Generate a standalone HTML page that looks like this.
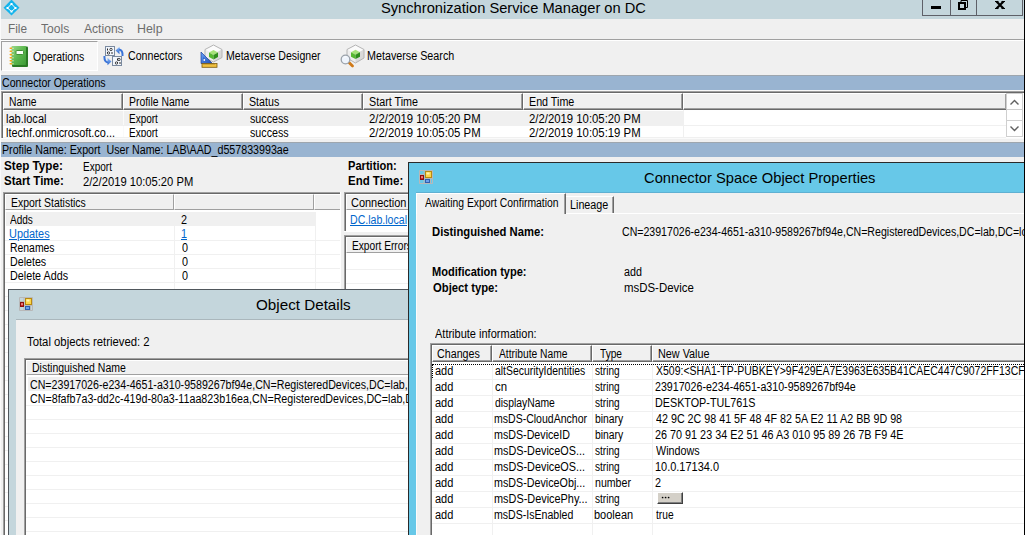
<!DOCTYPE html>
<html><head><meta charset="utf-8">
<style>
*{margin:0;padding:0;box-sizing:border-box}
html,body{width:1026px;height:535px;overflow:hidden;background:#f0f0f0}
body{position:relative;font-family:"Liberation Sans",sans-serif;font-size:12px;color:#000}
.a{position:absolute}
.t{position:absolute;white-space:nowrap;transform-origin:0 0;color:#000;-webkit-text-stroke:0px currentColor}
.lnk{color:#0066cc;text-decoration:underline}
.clip{position:absolute;overflow:hidden}
/* listview header cell: white top/left, #a0a0a0 inner bottom/right, #696969 outer bottom/right */
.hc{position:absolute;background:#f0f0f0;border-top:1px solid #fff;border-left:1px solid #fff;border-right:1px solid #696969;border-bottom:1px solid #696969;box-shadow:inset -1px -1px 0 #a0a0a0}
.hf{position:absolute;background:#f0f0f0;border-top:1px solid #fff;border-left:1px solid #fff;border-right:1px solid #a0a0a0;border-bottom:1px solid #a0a0a0}
.gl{position:absolute;height:1px;background:#f0f0f0}
.gv{position:absolute;width:1px;background:#f0f0f0}
.so{position:absolute;border-top:1px solid #a0a0a0;border-left:1px solid #a0a0a0}
.si{position:absolute;border-top:1px solid #696969;border-left:1px solid #696969;background:#fff;overflow:hidden}
</style></head><body>

<!-- ===== main window chrome ===== -->
<div class="a" style="left:0;top:0;width:1px;height:535px;background:#fafafa"></div>
<div class="a" style="left:1px;top:0;width:1023px;height:19px;background:#c4d6dc"></div>

<!-- app icon -->
<svg class="a" style="left:1.5px;top:0" width="19" height="17" viewBox="0 0 19 17">
 <path d="M9.5 -0.5 L17.5 7.8 L9.5 15.5 L1.5 7.8 Z" fill="#14b4ec"/>
 <path d="M9.5 4 L13.5 8 L9.5 11.5 L5.5 8 Z" fill="none" stroke="#fff" stroke-width="1"/>
 <rect x="8.5" y="3" width="2" height="2" fill="#fff"/><rect x="4.5" y="7" width="2" height="2" fill="#fff"/>
 <rect x="12.5" y="7" width="2" height="2" fill="#fff"/><rect x="8.5" y="10.5" width="2" height="2" fill="#fff"/>
</svg>

<!-- caption buttons -->
<div class="a" style="left:922px;top:-1px;width:101px;height:17px;border:1px solid #5e6068"></div>
<div class="a" style="left:950px;top:0;width:1px;height:15px;background:#5e6068"></div>
<div class="a" style="left:976px;top:0;width:1px;height:15px;background:#5e6068"></div>
<div class="a" style="left:931px;top:6px;width:10px;height:3px;background:#000"></div>
<svg class="a" style="left:956px;top:0" width="14" height="12" viewBox="0 0 14 12">
 <path d="M5 2 V0.5 H11.5 V7.5 H10" fill="none" stroke="#000" stroke-width="1"/>
 <rect x="3" y="3" width="6" height="6" fill="none" stroke="#000" stroke-width="2"/>
</svg>
<svg class="a" style="left:994px;top:0px" width="12" height="10" viewBox="0 0 12 10">
 <path d="M2.5 1.5 L9.5 8.5 M9.5 1.5 L2.5 8.5" stroke="#000" stroke-width="2.2"/>
 <path d="M1 1.5h3.5M7.5 1.5h3.5M1 8.5h3.5M7.5 8.5h3.5" stroke="#000" stroke-width="1"/>
</svg>

<div class="a" style="left:1px;top:39px;width:1023px;height:1px;background:#a0a0a0"></div>
<div class="a" style="left:1px;top:40px;width:1023px;height:1px;background:#fff"></div>

<!-- toolbar -->
<div class="a" style="left:1px;top:41px;width:97px;height:30px;background:#f7f7f7;border-top:1px solid #a0a0a0;border-left:1px solid #a0a0a0;border-right:1px solid #fff;border-bottom:1px solid #fff"></div>
<svg class="a" style="left:9px;top:45px" width="21" height="23" viewBox="0 0 21 23">
 <defs><linearGradient id="gn" x1="0" y1="0" x2="1" y2="1"><stop offset="0" stop-color="#9ad88a"/><stop offset="0.5" stop-color="#5cb84e"/><stop offset="1" stop-color="#3d9a36"/></linearGradient></defs>
 <rect x="3" y="1.5" width="16" height="20.5" rx="1" fill="#2a7a24"/>
 <rect x="2.5" y="1" width="14.5" height="19" rx="0.8" fill="url(#gn)"/>
 <rect x="7" y="5.5" width="7.5" height="4" rx="1" fill="#fafff6" stroke="#3f8f36" stroke-width="1"/>
 <g fill="#f2a81c"><rect x="0.5" y="2.5" width="3" height="1.6" rx="0.8"/><rect x="0.5" y="5.5" width="3" height="1.6" rx="0.8"/><rect x="0.5" y="8.8" width="3" height="1.6" rx="0.8"/><rect x="0.5" y="12" width="3" height="1.6" rx="0.8"/><rect x="0.5" y="15" width="3" height="1.6" rx="0.8"/><rect x="0.5" y="18" width="3" height="1.6" rx="0.8"/></g>
 <g fill="#ffffff"><rect x="3.5" y="2.8" width="1" height="1"/><rect x="3.5" y="5.8" width="1" height="1"/><rect x="3.5" y="9.1" width="1" height="1"/><rect x="3.5" y="12.3" width="1" height="1"/><rect x="3.5" y="15.3" width="1" height="1"/><rect x="3.5" y="18.3" width="1" height="1"/></g>
</svg>

<svg class="a" style="left:103px;top:45px" width="22" height="22" viewBox="0 0 22 22">
 <defs><linearGradient id="ab" x1="0" y1="0" x2="0" y2="1"><stop offset="0" stop-color="#8fc0ff"/><stop offset="1" stop-color="#2a62c8"/></linearGradient></defs>
 <rect x="2.5" y="1.5" width="9" height="9" fill="#f2f6fc" stroke="#7a8aa0"/>
 <rect x="9.5" y="11.5" width="9" height="9" fill="#f2f6fc" stroke="#7a8aa0"/>
 <path d="M4.5 3.5v2M4.5 7v1M14.5 13.5v2M14.5 17v1" stroke="#222"/>
 <circle cx="8" cy="4.5" r="1.2" fill="none" stroke="#333" stroke-width="0.9"/>
 <circle cx="5.5" cy="8" r="1.2" fill="none" stroke="#333" stroke-width="0.9"/>
 <path d="M9 7v2" stroke="#333"/>
 <circle cx="16" cy="14.5" r="1.2" fill="none" stroke="#333" stroke-width="0.9"/>
 <circle cx="13.5" cy="18" r="1.2" fill="none" stroke="#333" stroke-width="0.9"/>
 <path d="M17 17v2" stroke="#333"/>
 <path d="M12.5 5.5 L16.5 1.8 L16.5 9.2 Z" fill="url(#ab)"/>
 <path d="M16 4.5 Q20 5 19.5 11" fill="none" stroke="#3a74d8" stroke-width="2"/>
 <path d="M8.5 16.5 L4.5 12.8 L4.5 20.2 Z" fill="url(#ab)"/>
 <path d="M5 17.5 Q1 17 1.5 11" fill="none" stroke="#3a74d8" stroke-width="2"/>
</svg>

<svg class="a" style="left:196px;top:42px" width="30" height="28" viewBox="0 0 30 28">
 <defs>
  <linearGradient id="hx" x1="0" y1="0" x2="0" y2="1"><stop offset="0" stop-color="#ffffff"/><stop offset="1" stop-color="#d6d6d6"/></linearGradient>
  <linearGradient id="tb" x1="0" y1="0" x2="1" y2="1"><stop offset="0" stop-color="#6aa6ff"/><stop offset="1" stop-color="#1a48b0"/></linearGradient>
 </defs>
 <path d="M17.5 3 L26 7.5 L17.5 12 L9 7.5 Z" fill="#fbfbfb"/>
 <path d="M9 7.5 L17.5 12 L17.5 20 L9 15.5 Z" fill="#eeeeee"/>
 <path d="M26 7.5 L17.5 12 L17.5 20 L26 15.5 Z" fill="#d9d9d9"/>
 <path d="M17.5 3 L26 7.5 L26 15.5 L17.5 20 L9 15.5 L9 7.5 Z" fill="none" stroke="#b4b4b4"/>
 <path d="M17.5 8 L22 10.5 L17.5 13 L13 10.5 Z" fill="#a6e27a"/>
 <path d="M13 10.5 L17.5 13 L17.5 17.5 L13 15 Z" fill="#56b830"/>
 <path d="M22 10.5 L17.5 13 L17.5 17.5 L22 15 Z" fill="#2f8e1c"/>
 <path d="M5 10 L16.5 21.5 L5 21.5 Z" fill="url(#tb)" stroke="#1d3f98" stroke-width="0.7"/>
 <path d="M7 15 L11.5 19.5 L7 19.5 Z" fill="#3468c8"/>
 <circle cx="8.3" cy="18" r="0.9" fill="#fff"/>
 <rect x="6" y="21.5" width="15" height="3.8" fill="#f0c040" stroke="#7a5a10" stroke-width="0.8"/>
 <path d="M8 21.5v1.5M10 21.5v1.5M12 21.5v1.5M14 21.5v1.5M16 21.5v1.5M18 21.5v1.5" stroke="#8a6a20" stroke-width="0.6"/>
</svg>

<svg class="a" style="left:336px;top:42px" width="30" height="28" viewBox="0 0 30 28">
 <path d="M19.5 3 L28 7.5 L19.5 12 L11 7.5 Z" fill="#fbfbfb"/>
 <path d="M11 7.5 L19.5 12 L19.5 21 L11 16 Z" fill="#eeeeee"/>
 <path d="M28 7.5 L19.5 12 L19.5 21 L28 16 Z" fill="#d9d9d9"/>
 <path d="M19.5 3 L28 7.5 L28 16 L19.5 21 L11 16 L11 7.5 Z" fill="none" stroke="#b4b4b4"/>
 <path d="M19.5 7.8 L24 10.3 L19.5 12.8 L15 10.3 Z" fill="#a6e27a"/>
 <path d="M15 10.3 L19.5 12.8 L19.5 17 L15 14.8 Z" fill="#56b830"/>
 <path d="M24 10.3 L19.5 12.8 L19.5 17 L24 14.8 Z" fill="#2f8e1c"/>
 <path d="M12.5 20 L16.5 24" stroke="#d07a18" stroke-width="2.8" stroke-linecap="round"/>
 <circle cx="9.5" cy="17.5" r="4.3" fill="#eef4fc" stroke="#9aa2aa" stroke-width="1.3"/>
 <path d="M7.5 16 Q8.5 14.5 10.5 14.8" fill="none" stroke="#fff" stroke-width="1"/>
</svg>

<!-- ===== Connector Operations bar ===== -->
<div class="a" style="left:1px;top:75px;width:1023px;height:1px;background:#9ea6ae"></div>
<div class="a" style="left:1px;top:76px;width:1023px;height:14px;background:#99b4d1"></div>
<div class="a" style="left:1px;top:90px;width:1023px;height:1px;background:#f8f8f8"></div>

<!-- connector ops list -->
<div class="so" style="left:1px;top:91px;width:1023px;height:48px"></div>
<div class="si" style="left:2px;top:92px;width:1022px;height:46px">
 <div class="hc" style="left:0;top:0;width:120px;height:17px"></div>
 <div class="hc" style="left:120px;top:0;width:120px;height:17px"></div>
 <div class="hc" style="left:240px;top:0;width:120px;height:17px"></div>
 <div class="hc" style="left:360px;top:0;width:160px;height:17px"></div>
 <div class="hc" style="left:520px;top:0;width:160px;height:17px"></div>
 <div class="hc" style="left:680px;top:0;width:324px;height:17px"></div>
 <div class="a" style="left:0;top:18px;width:680px;height:1px;background:#fff"></div>
 <div class="a" style="left:1px;top:18px;width:679px;height:15px;background:#f0f0f0"></div>
 <div class="gv" style="left:120px;top:18px;height:30px;background:#fafafa"></div>
 <div class="gl" style="left:0px;top:32px;width:1010px"></div>
 <div class="gl" style="left:0px;top:44px;width:1010px"></div>
 <div class="gv" style="left:680px;top:17px;height:30px"></div>
</div>
<div class="clip" style="left:0;top:0;width:1006px;height:137px">
<div class="t" style="left:6.19px;top:126px;font-size:12px;line-height:14px;transform:scaleX(0.9076)">ltechf.onmicrosoft.co...</div>
<div class="t" style="left:129.47px;top:126px;font-size:12px;line-height:14px;transform:scaleX(0.8324)">Export</div>
<div class="t" style="left:249.80px;top:126px;font-size:12px;line-height:14px;transform:scaleX(0.8930)">success</div>
<div class="t" style="left:368.86px;top:126px;font-size:12px;line-height:14px;transform:scaleX(0.9448)">2/2/2019 10:05:05 PM</div>
<div class="t" style="left:529.36px;top:126px;font-size:12px;line-height:14px;transform:scaleX(0.9448)">2/2/2019 10:05:19 PM</div>
</div>
<!-- scrollbar -->
<div class="a" style="left:1006px;top:93px;width:17px;height:45px;background:#fff"></div>
<div class="a" style="left:1006px;top:93px;width:17px;height:17px;border:1px solid #cfcfcf;background:#fff"></div>
<div class="a" style="left:1006px;top:110px;width:17px;height:10px;border:1px solid #cfcfcf;border-top:0;border-bottom:0;background:#fff"></div>
<div class="a" style="left:1006px;top:120px;width:17px;height:17px;border:1px solid #cfcfcf;background:#fff"></div>
<svg class="a" style="left:1006px;top:93px" width="17" height="44" viewBox="0 0 17 44">
 <path d="M4.5 11.5 L8.5 7.5 L12.5 11.5" fill="none" stroke="#606060" stroke-width="1.4"/>
 <path d="M4.5 33.5 L8.5 37.5 L12.5 33.5" fill="none" stroke="#606060" stroke-width="1.4"/>
</svg>
<div class="a" style="left:1px;top:138px;width:1023px;height:4px;background:#f0f0f0"></div>
<div class="a" style="left:1px;top:138px;width:1023px;height:1px;background:#fafafa"></div>

<!-- ===== Profile bar ===== -->
<div class="a" style="left:1px;top:142px;width:1023px;height:1px;background:#9ea6ae"></div>
<div class="a" style="left:1px;top:143px;width:1023px;height:14px;background:#99b4d1"></div>

<!-- export statistics list -->
<div class="a" style="left:1px;top:192px;width:2px;height:343px;background:#f0f0f0"></div>
<div class="so" style="left:3px;top:192px;width:338px;height:343px"></div>
<div class="a" style="left:340px;top:192px;width:1px;height:343px;background:#fff"></div>
<div class="si" style="left:4px;top:193px;width:336px;height:342px">
 <div class="hf" style="left:0;top:0;width:169px;height:16px"></div>
 <div class="hf" style="left:169px;top:0;width:140px;height:16px"></div>
 <div class="hf" style="left:309px;top:0;width:40px;height:16px"></div>
 <div class="a" style="left:1px;top:18px;width:309px;height:14px;background:#f0f0f0"></div>
 <div class="gv" style="left:169px;top:18px;height:340px"></div>
 <div class="gv" style="left:310px;top:18px;height:340px"></div>
 <div class="gl" style="left:0;top:46px;width:340px"></div>
 <div class="gl" style="left:0;top:60px;width:340px"></div>
 <div class="gl" style="left:0;top:74px;width:340px"></div>
 <div class="gl" style="left:0;top:88px;width:340px"></div>
 <div class="gl" style="left:0;top:102px;width:340px"></div>
 <div class="gl" style="left:0;top:116px;width:340px"></div>
 <div class="gl" style="left:0;top:130px;width:340px"></div>
 <div class="gl" style="left:0;top:144px;width:340px"></div>
 <div class="gl" style="left:0;top:158px;width:340px"></div>
 <div class="gl" style="left:0;top:172px;width:340px"></div>
 <div class="gl" style="left:0;top:186px;width:340px"></div>
 <div class="gl" style="left:0;top:200px;width:340px"></div>
 <div class="gl" style="left:0;top:214px;width:340px"></div>
 <div class="gl" style="left:0;top:228px;width:340px"></div>
 <div class="gl" style="left:0;top:242px;width:340px"></div>
 <div class="gl" style="left:0;top:256px;width:340px"></div>
 <div class="gl" style="left:0;top:270px;width:340px"></div>
 <div class="gl" style="left:0;top:284px;width:340px"></div>
 <div class="gl" style="left:0;top:298px;width:340px"></div>
 <div class="gl" style="left:0;top:312px;width:340px"></div>
 <div class="gl" style="left:0;top:326px;width:340px"></div>
</div>

<!-- connection list -->
<div class="so" style="left:344px;top:192px;width:80px;height:39px"></div>
<div class="a" style="left:344px;top:231px;width:80px;height:1px;background:#fff"></div>
<div class="si" style="left:345px;top:193px;width:79px;height:38px">
 <div class="hf" style="left:0;top:0;width:120px;height:16px"></div>
</div>

<!-- export errors list -->
<div class="so" style="left:344px;top:235px;width:80px;height:300px"></div>
<div class="si" style="left:345px;top:236px;width:79px;height:299px">
 <div class="hf" style="left:0;top:0;width:120px;height:16px"></div>
 <div class="gl" style="left:0;top:32px;width:80px"></div>
 <div class="gl" style="left:0;top:46px;width:80px"></div>
</div>

<div class="t" style="left:381.42px;top:-1px;font-size:15px;line-height:18px;transform:scaleX(0.9777);-webkit-text-stroke:0;color:#000">Synchronization Service Manager on DC</div>
<div class="t" style="left:8.12px;top:22px;font-size:12px;line-height:14px;transform:scaleX(0.9833);color:#6d6d6d">File</div>
<div class="t" style="left:41.40px;top:22px;font-size:12px;line-height:14px;transform:scaleX(1.0071);color:#6d6d6d">Tools</div>
<div class="t" style="left:84.10px;top:22px;font-size:12px;line-height:14px;transform:scaleX(1.0077);color:#6d6d6d">Actions</div>
<div class="t" style="left:136.97px;top:22px;font-size:12px;line-height:14px;transform:scaleX(1.0348);color:#6d6d6d">Help</div>
<div class="t" style="left:33.40px;top:50px;font-size:12px;line-height:14px;transform:scaleX(0.8724)">Operations</div>
<div class="t" style="left:127.71px;top:49px;font-size:12px;line-height:14px;transform:scaleX(0.8867)">Connectors</div>
<div class="t" style="left:226.32px;top:49px;font-size:12px;line-height:14px;transform:scaleX(0.8804)">Metaverse Designer</div>
<div class="t" style="left:366.70px;top:49px;font-size:12px;line-height:14px;transform:scaleX(0.8958)">Metaverse Search</div>
<div class="t" style="left:1.52px;top:76px;font-size:12px;line-height:14px;transform:scaleX(0.8828)">Connector Operations</div>
<div class="t" style="left:9.44px;top:95px;font-size:12px;line-height:14px;transform:scaleX(0.8581)">Name</div>
<div class="t" style="left:129.23px;top:95px;font-size:12px;line-height:14px;transform:scaleX(0.8676)">Profile Name</div>
<div class="t" style="left:249.01px;top:95px;font-size:12px;line-height:14px;transform:scaleX(0.8879)">Status</div>
<div class="t" style="left:368.90px;top:95px;font-size:12px;line-height:14px;transform:scaleX(0.8962)">Start Time</div>
<div class="t" style="left:529.41px;top:95px;font-size:12px;line-height:14px;transform:scaleX(0.8939)">End Time</div>
<div class="t" style="left:6.28px;top:112px;font-size:12px;line-height:14px;transform:scaleX(0.9190)">lab.local</div>
<div class="t" style="left:129.47px;top:112px;font-size:12px;line-height:14px;transform:scaleX(0.8324)">Export</div>
<div class="t" style="left:249.80px;top:112px;font-size:12px;line-height:14px;transform:scaleX(0.8930)">success</div>
<div class="t" style="left:368.86px;top:112px;font-size:12px;line-height:14px;transform:scaleX(0.9448)">2/2/2019 10:05:20 PM</div>
<div class="t" style="left:529.36px;top:112px;font-size:12px;line-height:14px;transform:scaleX(0.9448)">2/2/2019 10:05:20 PM</div>
<div class="t" style="left:2.21px;top:143px;font-size:12px;line-height:14px;transform:scaleX(0.8900)">Profile Name: Export&nbsp; User Name: LAB\AAD_d557833993ae</div>
<div class="t" style="left:4.33px;top:159px;font-size:12px;line-height:14px;transform:scaleX(0.9729);font-weight:bold">Step Type:</div>
<div class="t" style="left:83.26px;top:160px;font-size:12px;line-height:14px;transform:scaleX(0.8353)">Export</div>
<div class="t" style="left:4.34px;top:174px;font-size:12px;line-height:14px;transform:scaleX(0.9574);font-weight:bold">Start Time:</div>
<div class="t" style="left:83.17px;top:175px;font-size:12px;line-height:14px;transform:scaleX(0.9336)">2/2/2019 10:05:20 PM</div>
<div class="t" style="left:347.67px;top:159px;font-size:12px;line-height:14px;transform:scaleX(0.9255);font-weight:bold">Partition:</div>
<div class="t" style="left:347.64px;top:174px;font-size:12px;line-height:14px;transform:scaleX(0.9554);font-weight:bold">End Time:</div>
<div class="t" style="left:11.23px;top:196px;font-size:12px;line-height:14px;transform:scaleX(0.8694)">Export Statistics</div>
<div class="t" style="left:10.40px;top:213px;font-size:12px;line-height:14px;transform:scaleX(0.8370)">Adds</div>
<div class="t lnk" style="left:9.49px;top:227px;font-size:12px;line-height:14px;transform:scaleX(0.9093)">Updates</div>
<div class="t" style="left:9.53px;top:241px;font-size:12px;line-height:14px;transform:scaleX(0.8680)">Renames</div>
<div class="t" style="left:9.51px;top:255px;font-size:12px;line-height:14px;transform:scaleX(0.8897)">Deletes</div>
<div class="t" style="left:9.50px;top:269px;font-size:12px;line-height:14px;transform:scaleX(0.8968)">Delete Adds</div>
<div class="t" style="left:180.70px;top:213px;font-size:12px;line-height:14px;transform:scaleX(0.9000)">2</div>
<div class="t lnk" style="left:180.70px;top:227px;font-size:12px;line-height:14px;transform:scaleX(0.9000)">1</div>
<div class="t" style="left:181.60px;top:241px;font-size:12px;line-height:14px;transform:scaleX(0.9000)">0</div>
<div class="t" style="left:181.60px;top:255px;font-size:12px;line-height:14px;transform:scaleX(0.9000)">0</div>
<div class="t" style="left:181.60px;top:269px;font-size:12px;line-height:14px;transform:scaleX(0.9000)">0</div>
<div class="t" style="left:351.39px;top:196px;font-size:12px;line-height:14px;transform:scaleX(0.9136)">Connection</div>
<div class="t lnk" style="left:350.42px;top:213px;font-size:12px;line-height:14px;transform:scaleX(0.8810)">DC.lab.local</div>
<div class="t" style="left:352.35px;top:239px;font-size:12px;line-height:14px;transform:scaleX(0.8471)">Export Errors</div>

<!-- ===== Object Details dialog ===== -->
<div class="a" style="left:8px;top:289px;width:420px;height:260px;background:#c4d6dc;border-top:1px solid #50565c;border-left:1px solid #50565c"></div>
<svg class="a" style="left:19px;top:297px" width="14" height="14" viewBox="0 0 14 14">
 <path d="M0.5 0.5H13.5V13.5H0.5Z M5 0.5V13.5 M11.5 8.5V13.5 M0.5 4.5H5 M0.5 9.5H5 M5 8.5H13.5" fill="none" stroke="#b8b8b8"/>
 <rect x="6.5" y="1.5" width="6" height="6" fill="#fcd54a" stroke="#b88a10"/>
 <rect x="7.5" y="2.5" width="3" height="2" fill="#fff3b0"/>
 <rect x="1.5" y="5.5" width="3" height="4" fill="#d42a2a" stroke="#8a1010"/>
 <rect x="2.3" y="6.3" width="1.4" height="1.6" fill="#f8b0b0"/>
 <rect x="6.5" y="9.5" width="4" height="3" fill="#6aa0ec" stroke="#2f5fb0"/>
</svg>
<div class="a" style="left:16px;top:319px;width:420px;height:1px;background:#aab7bc"></div>
<div class="a" style="left:16px;top:320px;width:420px;height:240px;background:#f0f0f0"></div>
<div class="so" style="left:24px;top:358px;width:400px;height:200px"></div>
<div class="si" style="left:25px;top:359px;width:400px;height:200px">
 <div class="a" style="left:0;top:0;width:400px;height:15px;background:#f0f0f0;border-top:1px solid #fff;border-left:1px solid #fff;border-bottom:1px solid #a0a0a0"></div>
 <div class="a" style="left:0;top:15px;width:400px;height:1px;background:#fff"></div>
 <div class="a" style="left:2px;top:17px;width:400px;height:14px;background:#f0f0f0"></div>
 <div class="gl" style="left:0;top:45px;width:400px"></div>
 <div class="gl" style="left:0;top:59px;width:400px"></div>
 <div class="gl" style="left:0;top:73px;width:400px"></div>
 <div class="gl" style="left:0;top:87px;width:400px"></div>
 <div class="gl" style="left:0;top:101px;width:400px"></div>
 <div class="gl" style="left:0;top:115px;width:400px"></div>
 <div class="gl" style="left:0;top:129px;width:400px"></div>
 <div class="gl" style="left:0;top:143px;width:400px"></div>
 <div class="gl" style="left:0;top:157px;width:400px"></div>
 <div class="gl" style="left:0;top:171px;width:400px"></div>
</div>

<div class="t" style="left:256.19px;top:296px;font-size:15px;line-height:18px;transform:scaleX(1.0141);-webkit-text-stroke:0;color:#000">Object Details</div>
<div class="t" style="left:27.20px;top:335px;font-size:12px;line-height:14px;transform:scaleX(0.9431)">Total objects retrieved: 2</div>
<div class="t" style="left:32.23px;top:361px;font-size:12px;line-height:14px;transform:scaleX(0.8736)">Distinguished Name</div>
<div class="t" style="left:29.71px;top:378px;font-size:12px;line-height:14px;transform:scaleX(0.8868)">CN=23917026-e234-4651-a310-9589267bf94e,CN=RegisteredDevices,DC=lab,DC=local</div>
<div class="t" style="left:29.71px;top:392px;font-size:12px;line-height:14px;transform:scaleX(0.8914)">CN=8fafb7a3-dd2c-419d-80a3-11aa823b16ea,CN=RegisteredDevices,DC=lab,DC=local</div>

<!-- ===== Connector Space Object Properties dialog ===== -->
<div class="a" style="left:408px;top:162px;width:616px;height:380px;background:#67c8e8;border-top:1px solid #2a2a2a;border-left:1px solid #2a2a2a"></div>
<svg class="a" style="left:419px;top:170px" width="14" height="14" viewBox="0 0 14 14">
 <path d="M0.5 0.5H13.5V13.5H0.5Z M5 0.5V13.5 M11.5 8.5V13.5 M0.5 4.5H5 M0.5 9.5H5 M5 8.5H13.5" fill="none" stroke="#b8b8b8"/>
 <rect x="6.5" y="1.5" width="6" height="6" fill="#fcd54a" stroke="#b88a10"/>
 <rect x="7.5" y="2.5" width="3" height="2" fill="#fff3b0"/>
 <rect x="1.5" y="5.5" width="3" height="4" fill="#d42a2a" stroke="#8a1010"/>
 <rect x="2.3" y="6.3" width="1.4" height="1.6" fill="#f8b0b0"/>
 <rect x="6.5" y="9.5" width="4" height="3" fill="#6aa0ec" stroke="#2f5fb0"/>
</svg>
<div class="a" style="left:416px;top:192px;width:608px;height:1px;background:#5fb0d2"></div>
<div class="a" style="left:416px;top:193px;width:608px;height:350px;background:#f0f0f0"></div>
<div class="a" style="left:416px;top:213px;width:1px;height:330px;background:#fcfcfc"></div>
<!-- tabs -->
<div class="a" style="left:416px;top:213px;width:608px;height:1px;background:#fff"></div>
<div class="a" style="left:416px;top:193px;width:150px;height:21px;background:#f0f0f0;border-top:1px solid #fff;border-left:1px solid #fff;border-right:1px solid #696969"></div>
<div class="a" style="left:564px;top:194px;width:1px;height:20px;background:#a0a0a0"></div>
<div class="a" style="left:566px;top:196px;width:48px;height:17px;background:#f0f0f0;border-top:1px solid #fff;border-right:1px solid #696969"></div>
<div class="a" style="left:612px;top:197px;width:1px;height:16px;background:#a0a0a0"></div>

<!-- attribute list -->
<div class="so" style="left:430px;top:343px;width:600px;height:200px"></div>
<div class="si" style="left:431px;top:344px;width:600px;height:200px">
 <div class="hc" style="left:0;top:0;width:60px;height:17px"></div>
 <div class="hc" style="left:60px;top:0;width:100px;height:17px"></div>
 <div class="hc" style="left:160px;top:0;width:60px;height:17px"></div>
 <div class="hc" style="left:220px;top:0;width:400px;height:17px"></div>
 <div class="gv" style="left:60px;top:18px;height:200px"></div>
 <div class="gv" style="left:160px;top:18px;height:200px"></div>
 <div class="gv" style="left:220px;top:18px;height:200px"></div>
 <div class="a" style="left:0;top:19px;width:600px;height:16px;border-top:1px dotted #000;border-left:1px dotted #000"></div>
 <div class="gl" style="left:0;top:34px;width:600px"></div>
 <div class="gl" style="left:0;top:50px;width:600px"></div>
 <div class="gl" style="left:0;top:66px;width:600px"></div>
 <div class="gl" style="left:0;top:82px;width:600px"></div>
 <div class="gl" style="left:0;top:98px;width:600px"></div>
 <div class="gl" style="left:0;top:114px;width:600px"></div>
 <div class="gl" style="left:0;top:130px;width:600px"></div>
 <div class="gl" style="left:0;top:146px;width:600px"></div>
 <div class="gl" style="left:0;top:162px;width:600px"></div>
 <div class="gl" style="left:0;top:178px;width:600px"></div>
</div>
<!-- "..." button -->
<div class="a" style="left:657px;top:492px;width:26px;height:12px;background:#d4d0c8;border-top:1px solid #fff;border-left:1px solid #fff;border-right:1px solid #404040;border-bottom:1px solid #404040;box-shadow:inset -1px -1px 0 #808080"></div>
<svg class="a" style="left:660px;top:495px" width="12" height="5" viewBox="0 0 12 5"><circle cx="2.6" cy="2.5" r="0.85" fill="#000"/><circle cx="5.6" cy="2.5" r="0.85" fill="#000"/><circle cx="8.6" cy="2.5" r="0.85" fill="#000"/></svg>

<div class="t" style="left:643.82px;top:169px;font-size:15px;line-height:18px;transform:scaleX(0.9809);-webkit-text-stroke:0;color:#000">Connector Space Object Properties</div>
<div class="t" style="left:424.80px;top:196px;font-size:12px;line-height:14px;transform:scaleX(0.8643)">Awaiting Export Confirmation</div>
<div class="t" style="left:570.20px;top:198px;font-size:12px;line-height:14px;transform:scaleX(0.8976)">Lineage</div>
<div class="t" style="left:432.46px;top:225px;font-size:12px;line-height:14px;transform:scaleX(0.9376);font-weight:bold">Distinguished Name:</div>
<div class="t" style="left:621.62px;top:225px;font-size:12px;line-height:14px;transform:scaleX(0.8819)">CN=23917026-e234-4651-a310-9589267bf94e,CN=RegisteredDevices,DC=lab,DC=local</div>
<div class="t" style="left:432.48px;top:265px;font-size:12px;line-height:14px;transform:scaleX(0.9208);font-weight:bold">Modification type:</div>
<div class="t" style="left:624.40px;top:265px;font-size:12px;line-height:14px;transform:scaleX(0.8947)">add</div>
<div class="t" style="left:433.40px;top:281px;font-size:12px;line-height:14px;transform:scaleX(0.9382);font-weight:bold">Object type:</div>
<div class="t" style="left:624.15px;top:281px;font-size:12px;line-height:14px;transform:scaleX(0.9514)">msDS-Device</div>
<div class="t" style="left:435.00px;top:327px;font-size:12px;line-height:14px;transform:scaleX(0.9173)">Attribute information:</div>
<div class="t" style="left:437.01px;top:347px;font-size:12px;line-height:14px;transform:scaleX(0.8915)">Changes</div>
<div class="t" style="left:499.10px;top:347px;font-size:12px;line-height:14px;transform:scaleX(0.8550)">Attribute Name</div>
<div class="t" style="left:599.80px;top:347px;font-size:12px;line-height:14px;transform:scaleX(0.8462)">Type</div>
<div class="t" style="left:658.40px;top:347px;font-size:12px;line-height:14px;transform:scaleX(0.9018)">New Value</div>
<div class="t" style="left:434.80px;top:364px;font-size:12px;line-height:14px;transform:scaleX(0.9158)">add</div>
<div class="t" style="left:494.70px;top:364px;font-size:12px;line-height:14px;transform:scaleX(0.8673)">altSecurityIdentities</div>
<div class="t" style="left:595.40px;top:364px;font-size:12px;line-height:14px;transform:scaleX(0.8414)">string</div>
<div class="t" style="left:655.90px;top:364px;font-size:12px;line-height:14px;transform:scaleX(0.8730)">X509:&lt;SHA1-TP-PUBKEY&gt;9F429EA7E3963E635B41CAEC447C9072FF13CF</div>
<div class="t" style="left:434.80px;top:380px;font-size:12px;line-height:14px;transform:scaleX(0.9158)">add</div>
<div class="t" style="left:494.70px;top:380px;font-size:12px;line-height:14px;transform:scaleX(0.9500)">cn</div>
<div class="t" style="left:595.40px;top:380px;font-size:12px;line-height:14px;transform:scaleX(0.8414)">string</div>
<div class="t" style="left:655.01px;top:380px;font-size:12px;line-height:14px;transform:scaleX(0.8876)">23917026-e234-4651-a310-9589267bf94e</div>
<div class="t" style="left:434.80px;top:396px;font-size:12px;line-height:14px;transform:scaleX(0.9158)">add</div>
<div class="t" style="left:494.70px;top:396px;font-size:12px;line-height:14px;transform:scaleX(0.8623)">displayName</div>
<div class="t" style="left:595.40px;top:396px;font-size:12px;line-height:14px;transform:scaleX(0.8414)">string</div>
<div class="t" style="left:655.00px;top:396px;font-size:12px;line-height:14px;transform:scaleX(0.8982)">DESKTOP-TUL761S</div>
<div class="t" style="left:434.80px;top:412px;font-size:12px;line-height:14px;transform:scaleX(0.9158)">add</div>
<div class="t" style="left:493.82px;top:412px;font-size:12px;line-height:14px;transform:scaleX(0.8771)">msDS-CloudAnchor</div>
<div class="t" style="left:594.54px;top:412px;font-size:12px;line-height:14px;transform:scaleX(0.8625)">binary</div>
<div class="t" style="left:655.90px;top:412px;font-size:12px;line-height:14px;transform:scaleX(0.8938)">42 9C 2C 98 41 5F 48 4F 82 5A E2 11 A2 BB 9D 98</div>
<div class="t" style="left:434.80px;top:428px;font-size:12px;line-height:14px;transform:scaleX(0.9158)">add</div>
<div class="t" style="left:493.81px;top:428px;font-size:12px;line-height:14px;transform:scaleX(0.8905)">msDS-DeviceID</div>
<div class="t" style="left:594.54px;top:428px;font-size:12px;line-height:14px;transform:scaleX(0.8625)">binary</div>
<div class="t" style="left:655.00px;top:428px;font-size:12px;line-height:14px;transform:scaleX(0.9015)">26 70 91 23 34 E2 51 46 A3 010 95 89 26 7B F9 4E</div>
<div class="t" style="left:434.80px;top:444px;font-size:12px;line-height:14px;transform:scaleX(0.9158)">add</div>
<div class="t" style="left:493.80px;top:444px;font-size:12px;line-height:14px;transform:scaleX(0.9030)">msDS-DeviceOS...</div>
<div class="t" style="left:595.40px;top:444px;font-size:12px;line-height:14px;transform:scaleX(0.8414)">string</div>
<div class="t" style="left:655.90px;top:444px;font-size:12px;line-height:14px;transform:scaleX(0.8958)">Windows</div>
<div class="t" style="left:434.80px;top:460px;font-size:12px;line-height:14px;transform:scaleX(0.9158)">add</div>
<div class="t" style="left:493.80px;top:460px;font-size:12px;line-height:14px;transform:scaleX(0.9030)">msDS-DeviceOS...</div>
<div class="t" style="left:595.40px;top:460px;font-size:12px;line-height:14px;transform:scaleX(0.8414)">string</div>
<div class="t" style="left:654.99px;top:460px;font-size:12px;line-height:14px;transform:scaleX(0.9130)">10.0.17134.0</div>
<div class="t" style="left:434.80px;top:476px;font-size:12px;line-height:14px;transform:scaleX(0.9158)">add</div>
<div class="t" style="left:493.81px;top:476px;font-size:12px;line-height:14px;transform:scaleX(0.8940)">msDS-DeviceObj...</div>
<div class="t" style="left:594.52px;top:476px;font-size:12px;line-height:14px;transform:scaleX(0.8825)">number</div>
<div class="t" style="left:655.00px;top:476px;font-size:12px;line-height:14px;transform:scaleX(0.9000)">2</div>
<div class="t" style="left:434.80px;top:492px;font-size:12px;line-height:14px;transform:scaleX(0.9158)">add</div>
<div class="t" style="left:493.79px;top:492px;font-size:12px;line-height:14px;transform:scaleX(0.9079)">msDS-DevicePhy...</div>
<div class="t" style="left:595.40px;top:492px;font-size:12px;line-height:14px;transform:scaleX(0.8414)">string</div>
<div class="t" style="left:434.80px;top:508px;font-size:12px;line-height:14px;transform:scaleX(0.9158)">add</div>
<div class="t" style="left:493.82px;top:508px;font-size:12px;line-height:14px;transform:scaleX(0.8807)">msDS-IsEnabled</div>
<div class="t" style="left:594.48px;top:508px;font-size:12px;line-height:14px;transform:scaleX(0.9171)">boolean</div>
<div class="t" style="left:655.90px;top:508px;font-size:12px;line-height:14px;transform:scaleX(0.8500)">true</div>

<!-- right edge -->
<div class="a" style="left:1024px;top:0;width:1px;height:535px;background:#000"></div>
<div class="a" style="left:1025px;top:0;width:1px;height:535px;background:#fff"></div>
</body></html>
